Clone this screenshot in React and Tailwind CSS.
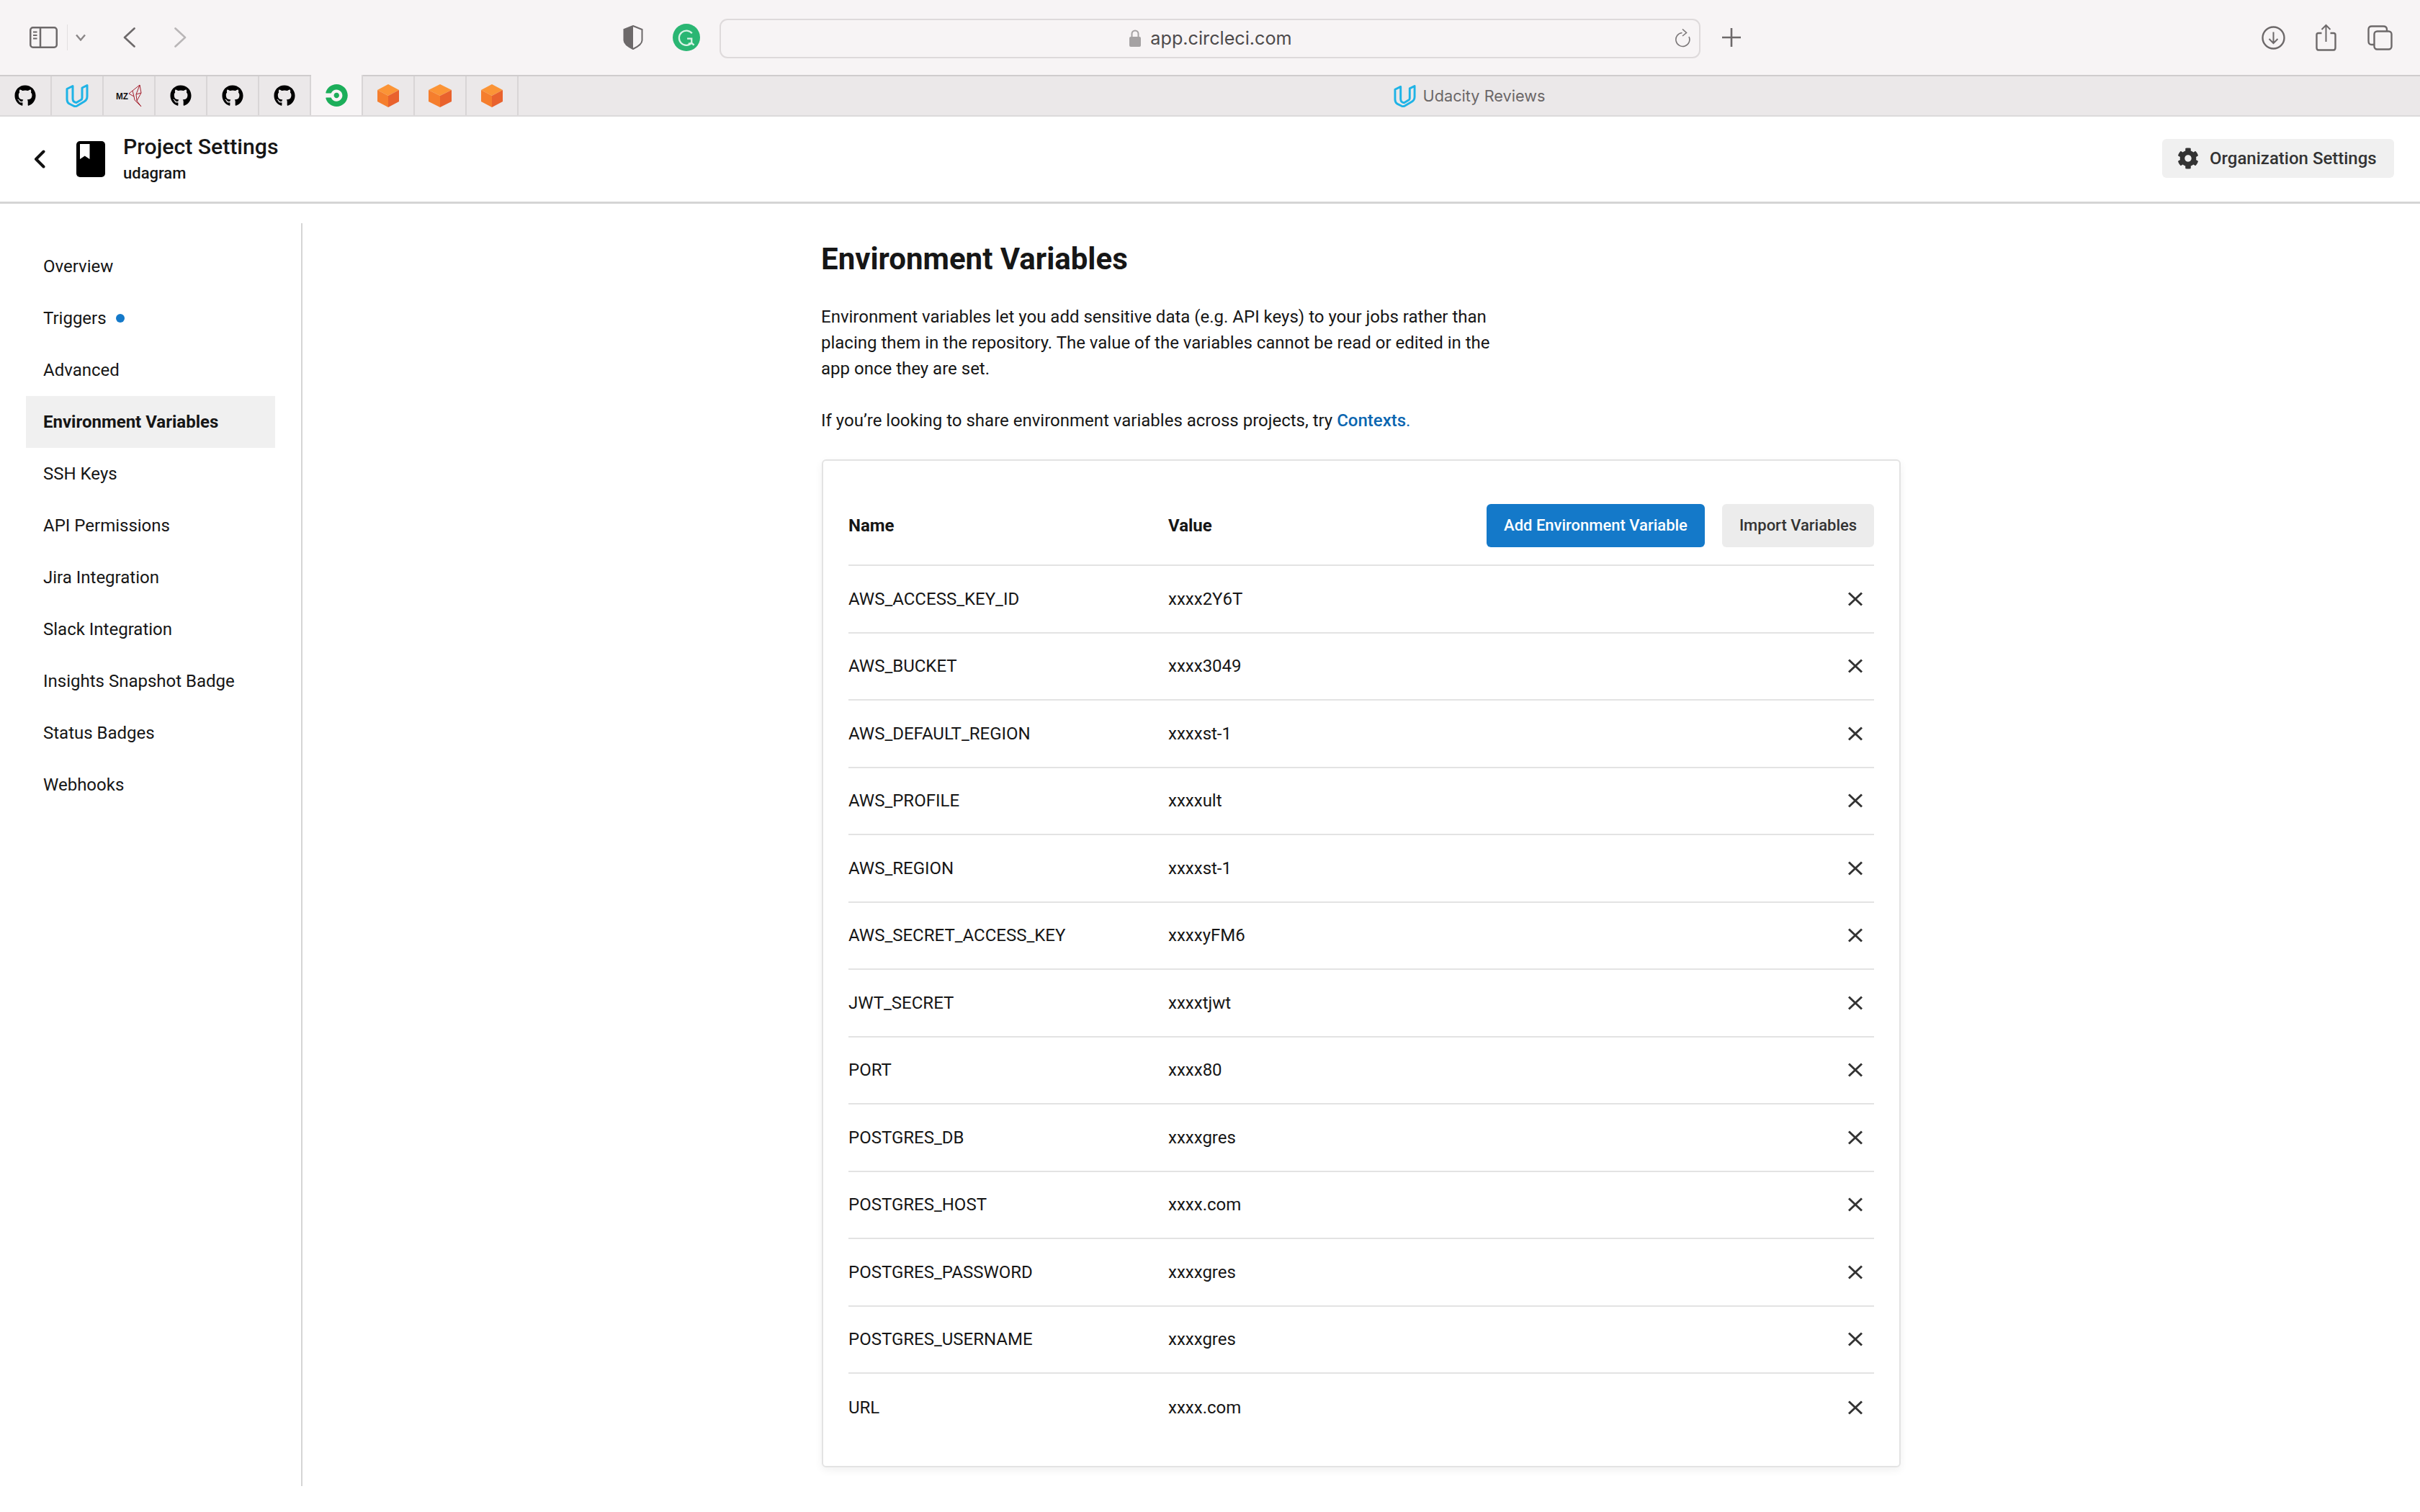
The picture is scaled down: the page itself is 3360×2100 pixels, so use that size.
import React from 'react';
import { FaGithub, FaCog } from 'react-icons/fa';
import { SiCircleci } from 'react-icons/si';

const navItems = [
  'Overview',
  'Triggers',
  'Advanced',
  'Environment Variables',
  'SSH Keys',
  'API Permissions',
  'Jira Integration',
  'Slack Integration',
  'Insights Snapshot Badge',
  'Status Badges',
  'Webhooks',
];

const envVars = [
  ['AWS_ACCESS_KEY_ID', 'xxxx2Y6T'],
  ['AWS_BUCKET', 'xxxx3049'],
  ['AWS_DEFAULT_REGION', 'xxxxst-1'],
  ['AWS_PROFILE', 'xxxxult'],
  ['AWS_REGION', 'xxxxst-1'],
  ['AWS_SECRET_ACCESS_KEY', 'xxxxyFM6'],
  ['JWT_SECRET', 'xxxxtjwt'],
  ['PORT', 'xxxx80'],
  ['POSTGRES_DB', 'xxxxgres'],
  ['POSTGRES_HOST', 'xxxx.com'],
  ['POSTGRES_PASSWORD', 'xxxxgres'],
  ['POSTGRES_USERNAME', 'xxxxgres'],
  ['URL', 'xxxx.com'],
];

const UdacityLogo = ({ className }) => (
  <svg viewBox="0 0 32 32" className={className} fill="none" stroke="#1fb3e6" strokeWidth="3" strokeLinejoin="round">
    <path d="M2 6.5 L2 21 Q2 25 5 27 L12 30.5 Q14 31 16 30 L26 24 Q30 21.5 30 17 L30 1.5 L23 5 L23 19 Q23 21 21 22 L15 25.5 Q10 25 10 20 L10 2.5 Z" />
  </svg>
);

const Cube = ({ className }) => (
  <svg viewBox="0 0 30 32" preserveAspectRatio="none" className={className}>
    <path d="M15 0 L30 8 L15 16 L0 8 Z" fill="#fb9436" />
    <path d="M0 8 L15 16 L15 32 L0 24 Z" fill="#f57e2d" />
    <path d="M30 8 L15 16 L15 32 L30 24 Z" fill="#e9622d" />
  </svg>
);

const MzLogo = () => (
  <div className="flex items-center">
    <span className="font-['Liberation_Sans',sans-serif] text-[13px] font-bold leading-none text-[#111] scale-x-90">MZ</span>
    <svg viewBox="0 0 20 32" className="w-[20px] h-[32px]" fill="none" stroke="#a5202e" strokeWidth="1">
      <path d="M1 13 L6 9 L8 17 L1 13 M6 9 L16 1 L18 12 L12 23 L18 31 L9 22 L8 17 M16 1 L11 14 L12 23 M18 12 L11 14" />
    </svg>
  </div>
);

const tabIcons = [
  <FaGithub className="w-[30px] h-[30px] text-black" />,
  <UdacityLogo className="w-[32px] h-[32px]" />,
  <MzLogo />,
  <FaGithub className="w-[30px] h-[30px] text-black" />,
  <FaGithub className="w-[30px] h-[30px] text-black" />,
  <FaGithub className="w-[30px] h-[30px] text-black" />,
  <SiCircleci className="w-[31px] h-[31px] text-[#1cae5a]" />,
  <Cube className="w-[30px] h-[32px]" />,
  <Cube className="w-[32px] h-[32px]" />,
  <Cube className="w-[30px] h-[32px]" />,
];

const Toolbar = () => (
  <div className="h-[104px] bg-[#f7f4f5] flex items-center text-[#6d696a] font-['Inter',sans-serif]">
    <svg viewBox="0 0 39 30" className="ml-[41px] w-[39px] h-[30px]" fill="none" stroke="currentColor" strokeWidth="2.5">
      <rect x="1.25" y="1.25" width="36.5" height="27.5" rx="3.5" />
      <path d="M15 1.5 V28.5" />
      <path d="M5 7.5 H10.5 M5 12 H10.5 M5 16.5 H10.5" strokeWidth="2" />
    </svg>
    <div className="ml-[13px] w-px h-[36px] bg-[#e2dfe0]" />
    <svg viewBox="0 0 14 10" className="ml-[11px] w-[14px] h-[10px]" fill="none" stroke="#8a8687" strokeWidth="2.4">
      <path d="M1 1.5 L7 8.5 L13 1.5" />
    </svg>
    <svg viewBox="0 0 17 28" className="ml-[52px] w-[17px] h-[28px]" fill="none" stroke="currentColor" strokeWidth="2.6" strokeLinecap="round" strokeLinejoin="round">
      <path d="M15.5 1.5 L2 14 L15.5 26.5" />
    </svg>
    <svg viewBox="0 0 17 28" className="ml-[54px] w-[17px] h-[28px]" fill="none" stroke="#b9b6b7" strokeWidth="2.6" strokeLinecap="round" strokeLinejoin="round">
      <path d="M1.5 1.5 L15 14 L1.5 26.5" />
    </svg>
    <svg viewBox="0 0 28 34" className="ml-[606px] w-[28px] h-[34px]" fill="none">
      <path d="M14 1 L26.5 6 V21 Q26.5 27 14 33 Q1.5 27 1.5 21 V6 Z" stroke="currentColor" strokeWidth="2" />
      <path d="M14 1 V33 Q1.5 27 1.5 21 V6 Z" fill="currentColor" />
    </svg>
    <div className="ml-[41px] w-[38px] h-[38px] rounded-full bg-[#2ab673] flex items-center justify-center">
      <svg viewBox="0 0 24 24" className="w-[27px] h-[27px]" fill="none" stroke="#d9f3e5" strokeWidth="2">
        <path d="M18.5 6.5 A9 9 0 1 0 18 18.5 V13 H12.5" />
        <path d="M14 19.5 L18 18.5 L21 21" />
      </svg>
    </div>
    <div className="ml-[27px] w-[1362px] h-[55px] mt-[2px] rounded-[11px] border-2 border-[#dedadb] grid grid-cols-[1fr_auto_1fr] items-center">
      <div />
      <div className="flex items-center gap-[13px] pl-[2px] pt-[1px]">
        <svg viewBox="0 0 16 24" className="w-[16px] h-[24px]" fill="none">
          <path d="M3.5 11 V6 a4.5 4.5 0 0 1 9 0 V11" stroke="#a5a2a3" strokeWidth="2" />
          <rect x="0" y="10" width="16" height="14" rx="2" fill="#a5a2a3" />
        </svg>
        <span className="text-[25.2px] leading-none text-[#4d4a4b]">app.circleci.com</span>
      </div>
      <div className="flex justify-end pr-[10px]">
        <svg viewBox="0 0 24 26" className="w-[24px] h-[26px]" fill="none" stroke="#7b7778" strokeWidth="1.6">
          <path d="M10.5 5.5 A9.5 9.5 0 1 0 20 11" />
          <path d="M11 0.5 L16.5 5.5 L11 10" />
        </svg>
      </div>
    </div>
    <svg viewBox="0 0 26 26" className="ml-[30px] w-[26px] h-[26px]" fill="none" stroke="currentColor" strokeWidth="2.6">
      <path d="M13 0 V26 M0 13 H26" />
    </svg>
    <svg viewBox="0 0 33 33" className="ml-[723px] w-[33px] h-[33px]" fill="none" stroke="currentColor" strokeWidth="2.4">
      <circle cx="16.5" cy="16.5" r="15" />
      <path d="M16.5 8.5 V24 M10.5 18 L16.5 24 L22.5 18" strokeWidth="2" />
    </svg>
    <svg viewBox="0 0 29 38" className="ml-[42px] w-[29px] h-[38px]" fill="none" stroke="currentColor" strokeWidth="2.4">
      <path d="M8.5 13 H4 Q1.5 13 1.5 15.5 V33 Q1.5 36.5 4 36.5 H25 Q27.5 36.5 27.5 33 V15.5 Q27.5 13 25 13 H20.5" />
      <path d="M14.5 2 V25 M8.5 8 L14.5 2 L20.5 8" strokeWidth="2" />
    </svg>
    <svg viewBox="0 0 35 35" className="ml-[43px] w-[35px] h-[35px]" fill="none" stroke="currentColor" strokeWidth="2.4">
      <rect x="9.5" y="8.5" width="24" height="25" rx="4" />
      <path d="M9 27 H6 Q1.5 27 1.5 22 V6 Q1.5 1.5 6 1.5 H22 Q27 1.5 27 6 V8" />
    </svg>
  </div>
);

const TabBar = () => (
  <div className="h-[58px] bg-[#ebe8e9] border-t-2 border-b-2 border-t-[#cfcccd] border-b-[#dcdadb] flex items-stretch font-['Inter',sans-serif]">
    {tabIcons.map((icon, i) => (
      <div
        key={i}
        className={`w-[72px] flex items-center justify-center border-r-2 border-[#d8d5d6] ${i === 6 ? 'bg-[#f7f4f5] -mt-[2px]' : ''}`}
      >
        {icon}
      </div>
    ))}
    <div className="flex-1 flex items-center justify-center gap-[10px]">
      <UdacityLogo className="w-[31px] h-[31px]" />
      <span className="text-[21.7px] text-[#6b6768]">Udacity Reviews</span>
    </div>
  </div>
);

const Header = () => (
  <div className="h-[121px] border-b-[3px] border-[#d5d5d5] flex items-center justify-between font-['Roboto',sans-serif]">
    <div className="flex items-center">
      <svg viewBox="0 0 16 26" className="ml-[47px] w-[16px] h-[26px]" fill="none" stroke="#111" strokeWidth="4" strokeLinecap="round" strokeLinejoin="round">
        <path d="M13.5 2.5 L3 13 L13.5 23.5" />
      </svg>
      <svg viewBox="0 0 40 50" className="ml-[43px] w-[40px] h-[50px]">
        <rect width="40" height="50" rx="5" fill="#000" />
        <path d="M5 4 H18.5 V25 L11.75 20.5 L5 25 Z" fill="#fff" />
      </svg>
      <div className="ml-[25px] flex flex-col">
        <span className="text-[30.2px] leading-[36px] -mt-[1px] font-medium text-[#161616]">Project Settings</span>
        <span className="text-[22px] leading-[28px] mt-[5px] font-medium text-[#161616]">udagram</span>
      </div>
    </div>
    <button className="mr-[36px] mb-[2px] w-[322px] h-[54px] rounded-[6px] bg-[#f0f0f0] flex items-center pl-[21px] text-[#333]">
      <FaCog className="w-[30px] h-[30px]" />
      <span className="ml-[15px] text-[24px] font-medium">Organization Settings</span>
    </button>
  </div>
);

const Sidebar = () => (
  <aside className="w-[420px] h-[1754px] mt-[27px] pt-[24px] pl-[36px] pr-[36px] border-r-2 border-[#d5d5d5] shrink-0">
    {navItems.map((item) => {
      const active = item === 'Environment Variables';
      return (
        <div
          key={item}
          className={`h-[72px] pl-[24px] flex items-center text-[24px] text-[#161616] ${active ? 'bg-[#f0f0f0] font-bold' : ''}`}
        >
          {item}
          {item === 'Triggers' && <span className="ml-[13px] w-[12px] h-[12px] rounded-full bg-[#1479c9]" />}
        </div>
      );
    })}
  </aside>
);

const EnvCard = () => (
  <div className="mt-[36px] ml-px w-[1498px] h-[1400px] px-[35px] pt-[60px] rounded-[6px] border-2 border-[#e3e3e3] bg-white shadow-[0_4px_12px_rgba(0,0,0,0.06)]">
    <div className="h-[86px] pb-[24px] border-b-2 border-[#e3e3e3] grid grid-cols-[444px_1fr_auto] items-center text-[24px] font-bold text-[#161616]">
      <span>Name</span>
      <span>Value</span>
      <div className="flex gap-[24px]">
        <button className="w-[303px] h-[60px] pb-[2px] rounded-[6px] bg-[#1479c9] text-white text-[22px] font-medium">Add Environment Variable</button>
        <button className="w-[211px] h-[60px] pb-[2px] rounded-[6px] bg-[#ececec] text-[#333] text-[22px] font-medium">Import Variables</button>
      </div>
    </div>
    {envVars.map(([name, value], i) => (
      <div
        key={name}
        className={`h-[93.5px] grid grid-cols-[444px_1fr_auto] items-center text-[24px] text-[#161616] ${i < envVars.length - 1 ? 'border-b-2 border-[#e3e3e3]' : ''}`}
      >
        <span>{name}</span>
        <span>{value}</span>
        <svg viewBox="0 0 20 20" className="mr-[16px] w-[20px] h-[20px]" fill="none" stroke="#333" strokeWidth="3">
          <path d="M1 1.5 L19 18.5 M19 1.5 L1 18.5" />
        </svg>
      </div>
    ))}
  </div>
);

const App = () => (
  <div className="w-[3360px] h-[2100px] bg-white overflow-hidden">
    <Toolbar />
    <TabBar />
    <Header />
    <div className="flex items-start font-['Roboto',sans-serif] text-[#161616]">
      <Sidebar />
      <main className="ml-[720px] pt-[52px]">
        <h1 className="text-[42px] leading-[50px] font-bold">Environment Variables</h1>
        <p className="mt-[37px] w-[960px] text-[24px] leading-[36px]">
          Environment variables let you add sensitive data (e.g. API keys) to your jobs rather than
          <br />
          placing them in the repository. The value of the variables cannot be read or edited in the
          <br />
          app once they are set.
        </p>
        <p className="mt-[36px] text-[24px] leading-[36px]">
          If you’re looking to share environment variables across projects, try{' '}
          <a className="text-[#0b66b0] font-medium">Contexts</a>
          <span className="text-[#0b66b0]">.</span>
        </p>
        <EnvCard />
      </main>
    </div>
  </div>
);

export default App;
